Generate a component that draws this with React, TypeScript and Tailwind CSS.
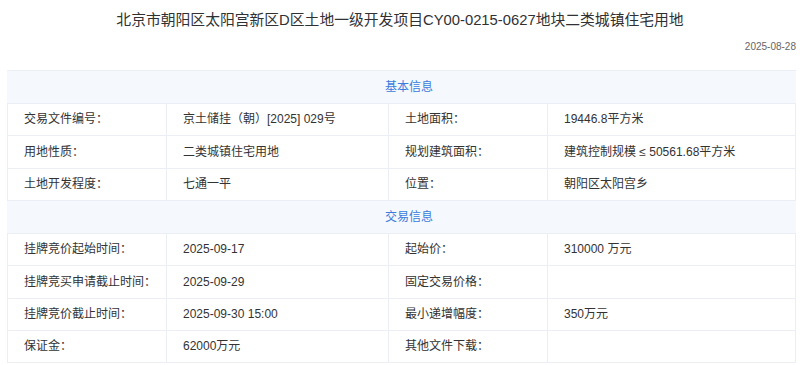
import React from "react";

type Row = [string, string, string, string];

const basic: Row[] = [
  ["交易文件编号：", "京土储挂（朝）[2025] 029号", "土地面积：", "19446.8平方米"],
  ["用地性质：", "二类城镇住宅用地", "规划建筑面积：", "建筑控制规模 ≤ 50561.68平方米"],
  ["土地开发程度：", "七通一平", "位置：", "朝阳区太阳宫乡"],
];

const trade: Row[] = [
  ["挂牌竞价起始时间：", "2025-09-17", "起始价：", "310000 万元"],
  ["挂牌竞买申请截止时间：", "2025-09-29", "固定交易价格：", ""],
  ["挂牌竞价截止时间：", "2025-09-30 15:00", "最小递增幅度：", "350万元"],
  ["保证金：", "62000万元", "其他文件下载：", ""],
];

function Header({ title }: { title: string }) {
  return (
    <div className="h-[32.5px] box-border border-t border-[#ebeef5] bg-[#f5f8fd] flex items-center justify-center pl-[15px] text-[12px] text-[#3b7ddd]">
      {title}
    </div>
  );
}

function DataRow({ row, last }: { row: Row; last?: boolean }) {
  return (
    <div
      className={
        "h-[32.5px] box-border border-t border-[#ebeef5] grid grid-cols-[159px_222px_159px_249px] text-[12px] text-[#333333] " +
        (last ? "border-b" : "")
      }
    >
      {row.map((c, i) => (
        <div
          key={i}
          className={
            "flex items-center pl-[16px] border-l border-[#ebeef5] whitespace-nowrap " +
            (i === 3 ? "border-r" : "")
          }
        >
          {c}
        </div>
      ))}
    </div>
  );
}

export default function App() {
  return (
    <div
      className="w-[800px] h-[365px] bg-white overflow-hidden"
      style={{ fontFamily: '"Liberation Sans", "Noto Sans CJK SC", sans-serif' }}
    >
      <div className="pt-[10px] h-[30px] text-center text-[14.8px] leading-[20px] text-[#303133]">
        北京市朝阳区太阳宫新区D区土地一级开发项目CY00-0215-0627地块二类城镇住宅用地
      </div>
      <div className="h-[40px] pt-[10px] pr-[4px] text-right text-[10px] leading-[14px] text-[#666666]">
        2025-08-28
      </div>
      <div className="ml-[7px] w-[789px]">
        <Header title="基本信息" />
        {basic.map((r, i) => (
          <DataRow key={i} row={r} />
        ))}
        <Header title="交易信息" />
        {trade.map((r, i) => (
          <DataRow key={i} row={r} last={i === trade.length - 1} />
        ))}
      </div>
    </div>
  );
}
